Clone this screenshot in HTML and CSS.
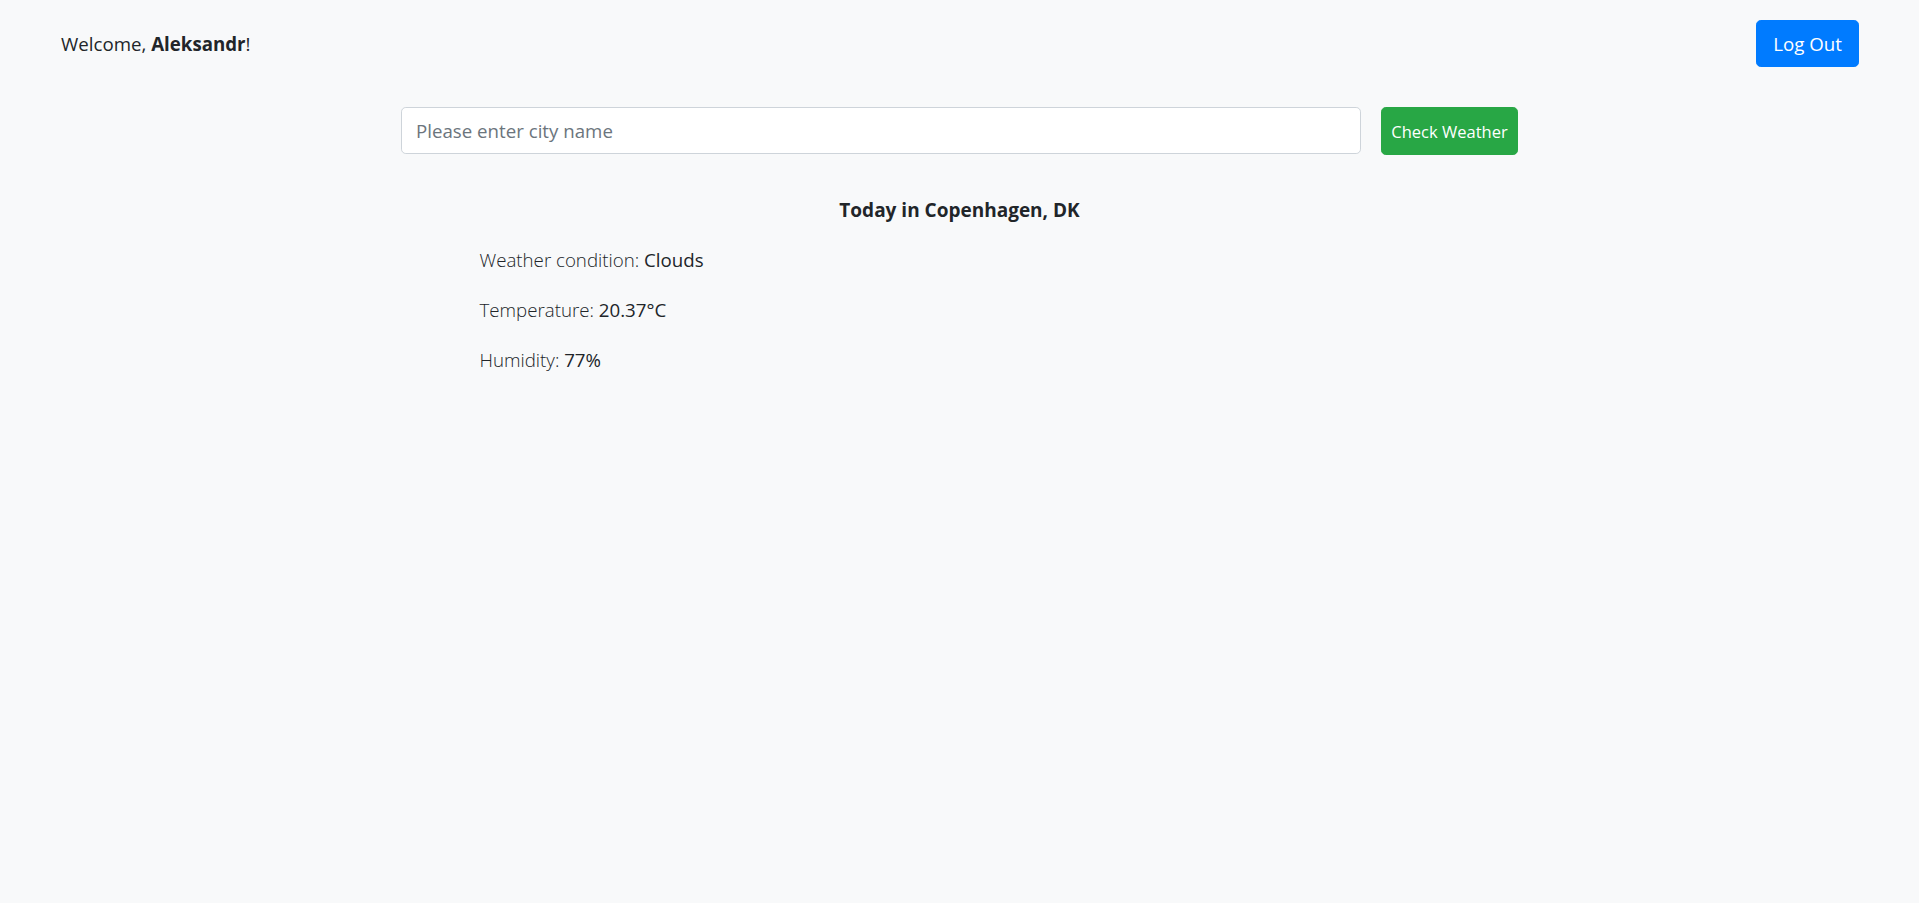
FILE: index.html
```html
<!DOCTYPE html>
<html lang="en">
<head>
<meta charset="utf-8">
<title>Weather</title>
<link rel="stylesheet" href="styles.css">
</head>
<body>
<header class="topbar">
  <span class="welcome">Welcome, <b>Aleksandr</b>!</span>
  <button class="btn btn-primary">Log Out</button>
</header>
<main class="main">
  <form class="search">
    <input class="city-input" type="text" placeholder="Please enter city name">
    <button class="btn btn-success" type="button">Check Weather</button>
  </form>
  <section class="result">
    <h5 class="result-title">Today in Copenhagen, DK</h5>
    <div class="details">
      <p class="lead">Weather condition: <span class="val">Clouds</span></p>
      <p class="lead">Temperature: <span class="val">20.37°C</span></p>
      <p class="lead">Humidity: <span class="val">77%</span></p>
    </div>
  </section>
</main>
</body>
</html>
```
FILE: styles.css
```css
* { box-sizing: border-box; }
html, body { height: 100%; }
body {
  margin: 0;
  background: #f8f9fa;
  color: #212529;
  font-family: "Open Sans", "Noto Sans", sans-serif;
  font-size: 16px;
}
.topbar {
  display: flex;
  justify-content: space-between;
  align-items: center;
  padding: 20px 60px 0 61px;
}
.welcome {
  font-size: 18.7px;
}
.welcome b { font-weight: 700; }
.btn {
  font-family: inherit;
  border: 1px solid transparent;
  color: #fff;
  cursor: pointer;
  border-radius: 4.8px;
}
.btn-primary {
  background: #007bff;
  border-color: #007bff;
  font-size: 18.7px;
  height: 47px;
  padding: 0 15px;
  min-width: 103px;
}
.main {
  display: flex;
  flex-direction: column;
  align-items: center;
  padding-top: 40px;
}
.search {
  display: flex;
  gap: 20px;
  width: 1117px;
  margin: 0;
}
.city-input {
  flex: 1;
  height: 47px;
  border: 1px solid #ced4da;
  border-radius: 4.8px;
  background: #fff;
  padding: 0 14px;
  font-family: inherit;
  font-size: 18.7px;
  color: #495057;
}
.city-input::placeholder { color: #6c757d; }
.btn-success {
  background: #28a745;
  border-color: #28a745;
  width: 137px;
  height: 48px;
  padding: 0;
  font-size: 16.5px;
  font-weight: 400;
}
.result {
  width: 960px;
  margin-top: 41px;
}
.result-title {
  text-align: center;
  margin: 0 0 20px 0;
  font-size: 19px;
  font-weight: 700;
  line-height: 1.5;
}
.details {
  padding-left: 0;
}
.lead {
  font-size: 18.7px;
  font-weight: 300;
  line-height: 30px;
  margin: 0 0 20px 0;
}
.val { font-weight: 400; }
```
